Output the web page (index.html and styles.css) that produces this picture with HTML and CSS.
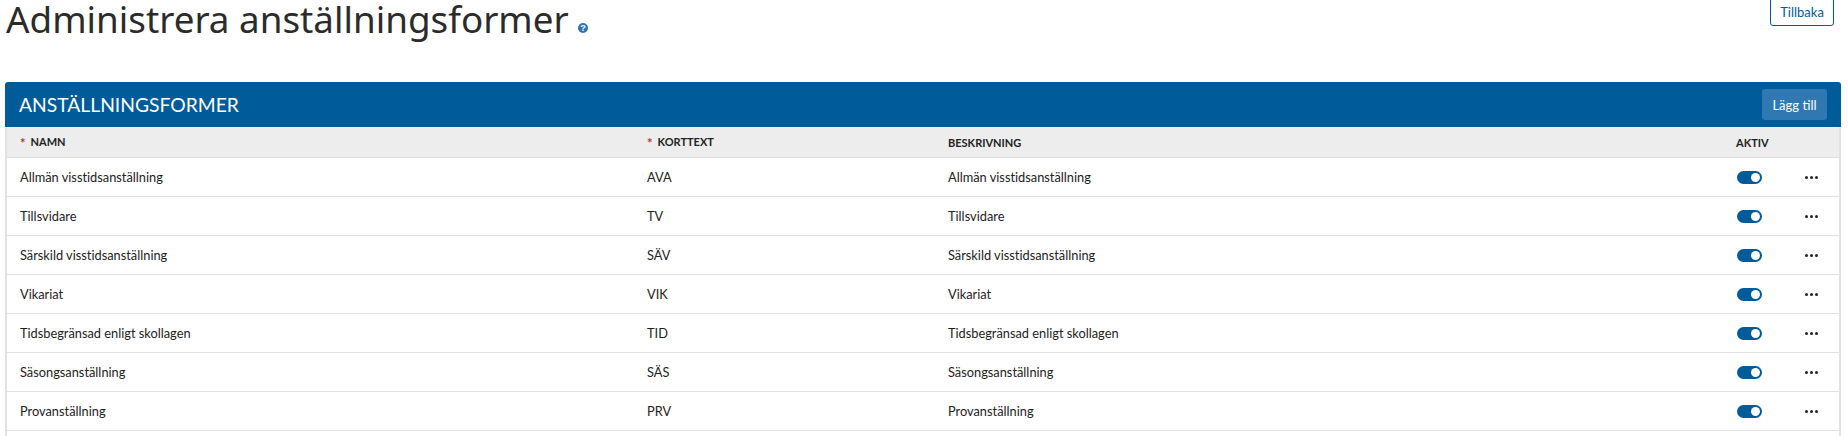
FILE: index.html
```html
<!DOCTYPE html>
<html lang="sv">
<head>
    <meta charset="UTF-8">
    <title>Administrera anställningsformer</title>
    <link rel="stylesheet" href="styles.css">
</head>
<body>
    <header class="sidhuvud">
        <h1>Administrera anställningsformer <svg class="hjalp" width="10" height="10" viewBox="0 0 12 12"><circle cx="6" cy="6" r="6" fill="#2e75b0"/><text x="6" y="10" text-anchor="middle" class="hjalptext">?</text></svg></h1>
        <a class="tillbaka" href="#">Tillbaka</a>
    </header>

    <section class="panel">
        <div class="panelrubrik">
            <h2>ANSTÄLLNINGSFORMER</h2>
            <button class="laggtill">Lägg till</button>
        </div>
        <div class="tabell">
            <div class="rad kolumnrubrik">
                <div><span class="krav">*</span>NAMN</div>
                <div><span class="krav">*</span>KORTTEXT</div>
                <div>BESKRIVNING</div>
                <div>AKTIV</div>
                <div></div>
            </div>
            <div class="rad">
                <div>Allmän visstidsanställning</div><div>AVA</div><div>Allmän visstidsanställning</div>
                <div><span class="vaxel"></span></div><div class="mer"><i></i><i></i><i></i></div>
            </div>
            <div class="rad">
                <div>Tillsvidare</div><div>TV</div><div>Tillsvidare</div>
                <div><span class="vaxel"></span></div><div class="mer"><i></i><i></i><i></i></div>
            </div>
            <div class="rad">
                <div>Särskild visstidsanställning</div><div>SÄV</div><div>Särskild visstidsanställning</div>
                <div><span class="vaxel"></span></div><div class="mer"><i></i><i></i><i></i></div>
            </div>
            <div class="rad">
                <div>Vikariat</div><div>VIK</div><div>Vikariat</div>
                <div><span class="vaxel"></span></div><div class="mer"><i></i><i></i><i></i></div>
            </div>
            <div class="rad">
                <div>Tidsbegränsad enligt skollagen</div><div>TID</div><div>Tidsbegränsad enligt skollagen</div>
                <div><span class="vaxel"></span></div><div class="mer"><i></i><i></i><i></i></div>
            </div>
            <div class="rad">
                <div>Säsongsanställning</div><div>SÄS</div><div>Säsongsanställning</div>
                <div><span class="vaxel"></span></div><div class="mer"><i></i><i></i><i></i></div>
            </div>
            <div class="rad">
                <div>Provanställning</div><div>PRV</div><div>Provanställning</div>
                <div><span class="vaxel"></span></div><div class="mer"><i></i><i></i><i></i></div>
            </div>
        </div>
    </section>
</body>
</html>
```
FILE: styles.css
```css
html, body {
    height: 436px;
    overflow: hidden;
}

body {
    margin: 0;
    padding: 0 7px 0 5px;
    font-family: Lato, sans-serif;
    font-size: 12.8px;
    font-variant-ligatures: none;
    color: #222;
    background-color: #fff;
}

.sidhuvud {
    display: flex;
    justify-content: space-between;
    align-items: flex-start;
    height: 82px;
}

h1 {
    margin: 0 0 0 1px;
    font-family: "Noto Sans", sans-serif;
    font-weight: 400;
    font-size: 36.8px;
    line-height: 38px;
    color: #2b2b2b;
}

.hjalp {
    vertical-align: 0;
}

.hjalptext {
    font-family: "Liberation Sans", sans-serif;
    font-size: 11px;
    font-weight: 700;
    fill: #fff;
}

.tillbaka {
    box-sizing: border-box;
    width: 64px;
    height: 36px;
    margin: -10px 7px 0 0;
    padding-top: 13px;
    border: 1px solid #005b9a;
    border-radius: 3px;
    text-align: center;
    font-size: 13px;
    color: #005b9a;
    text-decoration: none;
}

.panelrubrik {
    display: flex;
    justify-content: space-between;
    align-items: center;
    height: 45px;
    padding: 0 14px 0 14px;
    background-color: #005b9a;
    border-radius: 3px 3px 0 0;
}

h2 {
    margin: 0;
    font-size: 19.3px;
    font-weight: 400;
    color: #fff;
}

.laggtill {
    width: 65px;
    height: 31px;
    padding: 0;
    border: 0;
    border-radius: 3px;
    font-family: Lato, sans-serif;
    font-size: 13px;
    color: #fff;
    background-color: #2f78b2;
}

.tabell {
    height: 320px;
    border-left: 2px solid #e2e2e2;
    border-right: 2px solid #e2e2e2;
}

.rad {
    display: grid;
    grid-template-columns: 627px 301px 788px 69px 1fr;
    align-items: center;
    height: 38px;
    padding-left: 13px;
    border-bottom: 1px solid #e0e0e0;
}

.kolumnrubrik {
    height: 30px;
    font-size: 11px;
    font-weight: 700;
    background-color: #ededed;
}

.krav {
    margin-right: 5px;
    font-size: 13px;
    vertical-align: -2px;
    line-height: 1;
    color: #b03a2e;
}

.vaxel {
    position: relative;
    display: block;
    width: 25px;
    height: 13px;
    margin-left: 1px;
    border-radius: 7px;
    background-color: #005b9a;
}

.vaxel::after {
    content: "";
    position: absolute;
    top: 2px;
    right: 2px;
    width: 9px;
    height: 9px;
    border-radius: 50%;
    background-color: #fff;
}

.mer {
    display: flex;
    gap: 2px;
}

.mer i {
    width: 3px;
    height: 3px;
    border-radius: 50%;
    background-color: #222;
}
```
